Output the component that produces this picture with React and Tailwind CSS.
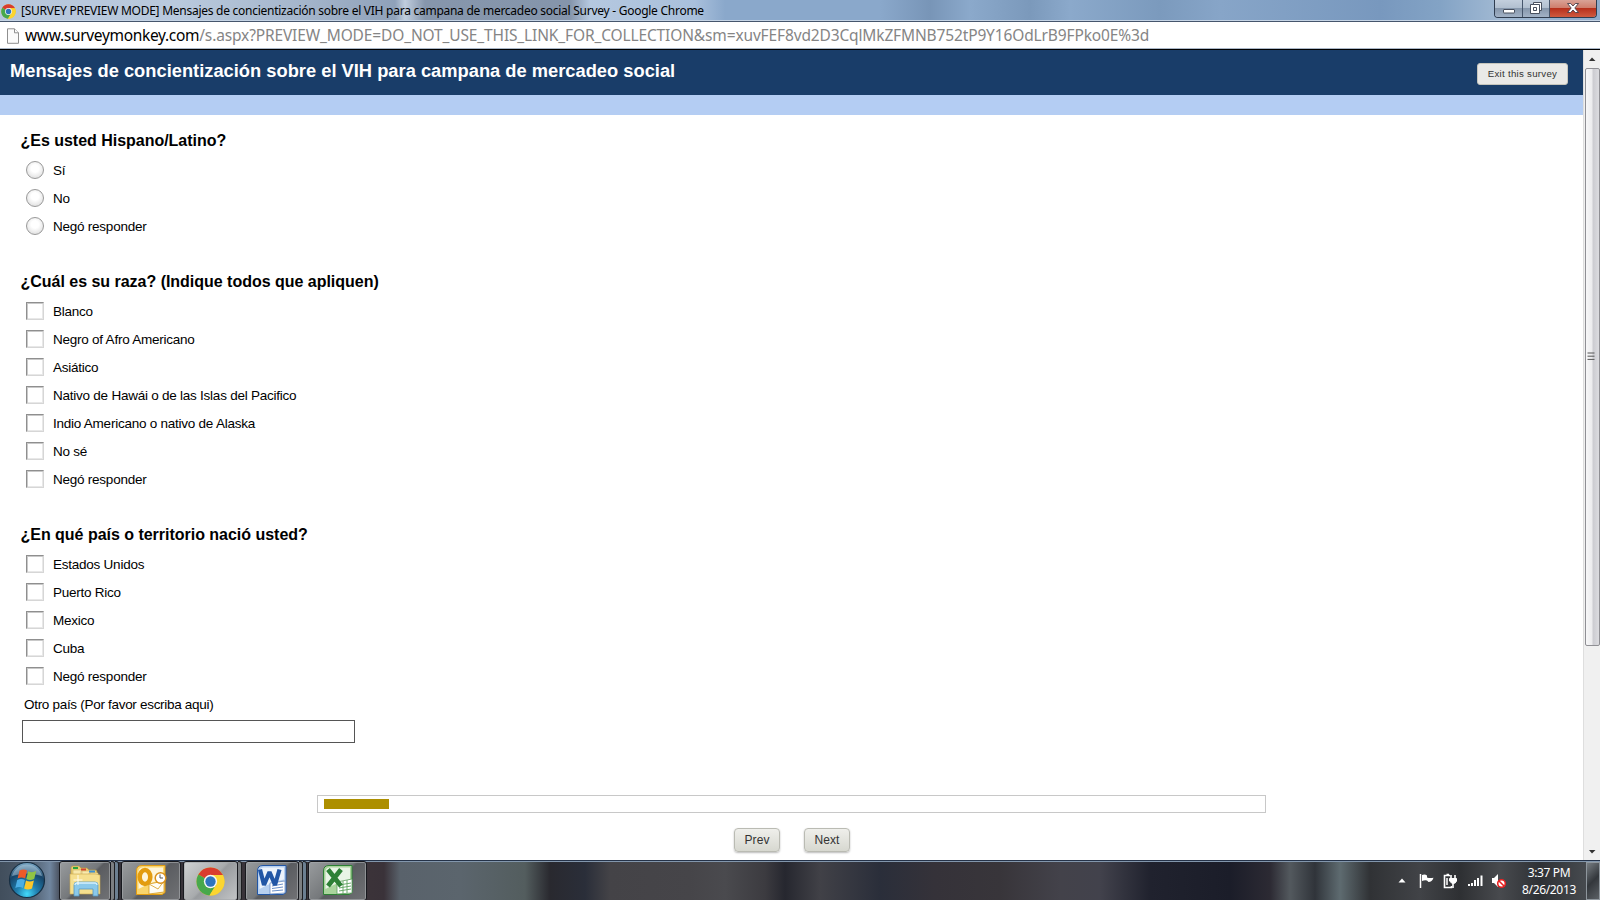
import React from "react";

const questions = [
  { title: "¿Es usted Hispano/Latino?", type: "radio", options: ["Sí", "No", "Negó responder"] },
  {
    title: "¿Cuál es su raza? (Indique todos que apliquen)",
    type: "checkbox",
    options: ["Blanco", "Negro of Afro Americano", "Asiático", "Nativo de Hawái o de las Islas del Pacifico", "Indio Americano o nativo de Alaska", "No sé", "Negó responder"],
  },
  {
    title: "¿En qué país o territorio nació usted?",
    type: "checkbox",
    options: ["Estados Unidos", "Puerto Rico", "Mexico", "Cuba", "Negó responder"],
  },
];

function ChromeLogo({ className }) {
  return (
    <svg viewBox="0 0 28 28" className={className}>
      <circle cx="14" cy="14" r="13.5" fill="#e8c62c" />
      <path d="M14 14 L2.3 7.2 A13.5 13.5 0 0 1 25.7 7.2 L25.9 7.8 H14Z" fill="#d93c2e" />
      <path d="M14 14 L2.3 7.2 A13.5 13.5 0 0 0 13 27.5 L19.6 17Z" fill="#47a84b" />
      <path d="M14 7.8 H25.9 A13.5 13.5 0 0 1 13 27.5 L19.6 17Z" fill="#fbd530" />
      <circle cx="14" cy="14" r="6.4" fill="#f6f6f6" />
      <circle cx="14" cy="14" r="5" fill="#2f74bd" />
    </svg>
  );
}

function TitleBar() {
  return (
    <header className="relative h-[20px] shrink-0 overflow-hidden bg-[linear-gradient(90deg,#b7c7dc_0,#b9c9dd_180px,#a5b6cc_300px,#8fa1b9_395px,#c0cddd_405px,#8696ac_425px,#8595ab_570px,#b5c8df_590px,#a9c0dc_695px,#8aa8cb_725px,#8aa8cb_880px,#7895b7_930px,#8ba9cb_970px,#7b99bb_1030px,#8ba9cb_1070px,#7b9abd_1160px,#87a5c8_1220px,#7898be_1380px,#83a3c5_1440px,#a1b9d3_1500px,#8faccc_1600px)]">
      <div className="flex h-full items-center pl-[1px]">
        <ChromeLogo className="mt-[2px] h-[15px] w-[15px]" />
        <span className="ml-[5px] mt-[2px] whitespace-nowrap font-['Noto_Sans',sans-serif] text-[12px] leading-[16px] tracking-[-0.263px] text-black">
          [SURVEY PREVIEW MODE] Mensajes de concientización sobre el VIH para campana de mercadeo social Survey - Google Chrome
        </span>
      </div>
      <div className="absolute right-[3px] top-0 flex h-[18px] w-[103px] overflow-hidden rounded-b-[4px] border border-t-0 border-[#2f3d50]">
        <div className="flex w-[28px] items-center justify-center border-r border-[#46566c] bg-[linear-gradient(#c3cfdd_0,#b2c0d0_45%,#8697ac_50%,#a2b2c6_100%)]">
          <svg viewBox="0 0 14 16" className="h-4 w-3.5"><rect x="1.5" y="8.5" width="11" height="3.5" rx=".5" fill="#fff" stroke="#48505f" /></svg>
        </div>
        <div className="flex w-[27px] items-center justify-center border-r border-[#46566c] bg-[linear-gradient(#c3cfdd_0,#b2c0d0_45%,#8697ac_50%,#a2b2c6_100%)]">
          <svg viewBox="0 0 14 16" className="-mt-[2px] h-4 w-3.5" fill="#fff" stroke="#48505f">
            <path d="M4.500 2.500h8v8h-8z" />
            <path d="M1.500 4.500h9v9h-9zM4.500 7.500h3v3h-3z" fillRule="evenodd" />
          </svg>
        </div>
        <div className="flex flex-1 items-center justify-center bg-[linear-gradient(#d9a296_0,#cf7e6d_45%,#b7301c_50%,#cf5a3f_100%)]">
          <svg viewBox="0 0 14 14" className="-mt-[2px] h-3.5 w-3.5"><path d="M1.500 2.500h3.200L7 5l2.300-2.500h3.200L8.800 7l3.700 4.500H9.300L7 9l-2.300 2.500H1.500L5.200 7z" fill="#fff" stroke="#48404a" strokeWidth=".9" /></svg>
        </div>
      </div>
    </header>
  );
}

function AddressBar() {
  return (
    <div className="flex h-[27px] shrink-0 items-center border-b border-[#aab7c8] bg-white pl-[7px]">
      <svg viewBox="0 0 12 16" className="mt-[1px] h-[16px] w-[12px]" fill="#fbfbfb" stroke="#8f8f8f"><path d="M.5.8h7l4 4v10.500H.5z" /><path d="M7.500.8v4h4" /></svg>
      <div className="ml-[6px] whitespace-nowrap font-['Noto_Sans',sans-serif] text-[15.5px] leading-[22px] text-[#858585]">
        <span className="tracking-[-0.32px] text-black">www.surveymonkey.com</span>
        <span className="tracking-[-0.138px]">/s.aspx?PREVIEW_MODE=DO_NOT_USE_THIS_LINK_FOR_COLLECTION&amp;sm=xuvFEF8vd2D3CqlMkZFMNB752tP9Y16OdLrB9FPko0E%3d</span>
      </div>
    </div>
  );
}

function Option({ type, label }) {
  return (
    <label className="flex h-[28px] items-center pl-[26px]">
      {type === "radio" ? (
        <span className="h-[18px] w-[18px] rounded-full border border-[#999] bg-[radial-gradient(circle_at_50%_40%,#fff_30%,#d4d4d4_100%)]" />
      ) : (
        <span className="h-[18px] w-[18px] border border-b-[#d6d6d6] border-l-[#8f8f8f] border-r-[#d6d6d6] border-t-[#8f8f8f] bg-white shadow-[inset_1px_1px_0_#c9c9c9,inset_-1px_-1px_0_#e8e8e8]" />
      )}
      <span className="ml-[9px] mt-[1px] whitespace-nowrap text-[13.5px] leading-[16px] tracking-[-0.24px]">{label}</span>
    </label>
  );
}

function Survey() {
  return (
    <div className="flex min-w-0 flex-1 flex-col bg-white">
      <div className="flex h-[45px] shrink-0 justify-between bg-[#193d69] pl-[10px] pr-[15px]">
        <h1 className="mt-[9px] whitespace-nowrap text-[18.3px] font-bold leading-[24px] tracking-[0.01px] text-white">Mensajes de concientización sobre el VIH para campana de mercadeo social</h1>
        <button className="mt-[13px] h-[22px] w-[91px] rounded-[3px] border border-[#c6c6bd] bg-[#e9e9e7] text-[9.7px] leading-[20px] tracking-[0.27px] text-[#333]">Exit this survey</button>
      </div>
      <div className="h-[20px] shrink-0 bg-[#b4cdf3]" />
      <main className="flex flex-col pt-[16px]">
        <div className="flex flex-col gap-[32px]">
          {questions.map((q) => (
            <section key={q.title}>
              <h2 className="mb-[5px] whitespace-nowrap pl-[20.5px] text-[16px] font-bold leading-[20px] tracking-[-0.02px]">{q.title}</h2>
              {q.options.map((o) => <Option key={o} type={q.type} label={o} />)}
            </section>
          ))}
        </div>
        <div className="flex h-[30px] items-center pl-[24px] text-[13.5px] tracking-[-0.3px]">Otro país (Por favor escriba aqui)</div>
        <div className="ml-[22px] h-[23px] w-[333px] border border-[#555] bg-white" />
        <div className="ml-[317px] mt-[52px] flex h-[18px] w-[949px] items-center border border-[#c8c8c8] pl-[6px]">
          <div className="h-[10px] w-[65px] bg-[#ad8f00]" />
        </div>
        <div className="mt-[15px] flex justify-center gap-[24px]">
          {["Prev", "Next"].map((t) => (
            <button key={t} className="h-[24px] w-[46px] rounded-[4px] border border-[#babbb3] bg-[linear-gradient(#efefeb,#d7d8d0)] pl-[1px] text-[12px] leading-[20px] tracking-[0.1px] text-[#333] shadow-[0_1px_2px_#bbb]">{t}</button>
          ))}
        </div>
      </main>
    </div>
  );
}

function Scrollbar() {
  return (
    <div className="flex w-[17px] shrink-0 flex-col items-center border-l border-[#dedede] bg-[#f0f0f0]">
      <svg viewBox="0 0 16 18" className="h-[18px] w-[16px]"><path d="M5 11 8 7.500 11.500 11z" fill="#333" /></svg>
      <div className="flex h-[578px] w-[15px] items-center justify-center rounded-[2px] border border-[#8f8f94] bg-[linear-gradient(90deg,#f7f7f8_0,#ececee_45%,#ccccd1_55%,#dcdce0_100%)] pb-[2px] pr-[2px]">
        <svg viewBox="0 0 8 9" className="h-[9px] w-[8px]" stroke="#555"><path d="M.5 1h7M.5 4.200h7M.5 7.400h7" /></svg>
      </div>
      <svg viewBox="0 0 16 18" className="mt-auto h-[18px] w-[16px]"><path d="M5 8 8 11.500 11.500 8z" fill="#333" /></svg>
    </div>
  );
}

function ExplorerIcon() {
  return (
    <svg viewBox="0 0 32 32" className="h-[32px] w-[32px]">
      <path d="M2 3q0-2 2-2h6l2 2h6l2 2h6q2 0 2 2v20H2z" fill="#e9ce71" stroke="#b99a42" strokeWidth=".7" />
      <path d="M4 5h9v22H4zM12 6h9v21h-9zM20 8h9v19h-9z" fill="#f8e9ac" stroke="#d2b765" strokeWidth=".6" />
      <path d="M4 2h5v2H4z" fill="#2aa33d" /><path d="M12 3.500h5v2h-5z" fill="#d24432" /><path d="M20 5.500h6v2h-6z" fill="#3e91d2" />
      <path d="M1 9h25l5 1v19H1z" fill="#f5df8e" stroke="#caa94f" strokeWidth=".6" />
      <path d="M5 31V20q0-3 3-3h18q3 0 3 3v11h-5v-7H10v7z" fill="#8bc9ea" stroke="#5798c2" strokeWidth=".8" />
      <path d="M6 20q0-2 2-2h18q2 0 2 2" stroke="#d6f0fc" strokeWidth="1.300" fill="none" />
      <path d="M9 10v10M4.500 15h9" stroke="#fffdf0" strokeWidth="1" />
    </svg>
  );
}

function OfficeIcon({ kind }) {
  const colors = { O: ["#e39c10", "#f9d56d"], W: ["#2256a5", "#b7d0f0"], X: ["#2d8035", "#a9d49c"] }[kind];
  return (
    <svg viewBox="0 0 32 32" className="-mt-[3px] h-[32px] w-[32px]">
      <path d="M7 1.500h23v27l-3 2H1.500V7q0-5.500 5.500-5.500z" fill={colors[1]} stroke={colors[0]} strokeWidth="1" />
      <path d="M3.500 8q0-4.500 4.500-4.500h20v12Q18 17 3.500 25z" fill="#fff" opacity=".75" />
      {kind === "O" && (
        <>
          <ellipse cx="10" cy="13" rx="5.300" ry="7" fill="none" stroke={colors[0]} strokeWidth="4.500" />
          <path d="M14 20 29 17v11l-15 2z" fill="#fffdf4" stroke="#d49a22" strokeWidth=".8" /><path d="m14 20 9 5 6-8" fill="none" stroke="#d49a22" strokeWidth=".8" />
          <circle cx="25.500" cy="14" r="5.300" fill="#fff" stroke="#d99018" strokeWidth="1.500" /><path d="M25 10.500V14h3" stroke="#555" fill="none" />
        </>
      )}
      {kind === "W" && (
        <>
          <path d="M14 19l15-2v12l-15 1z" fill="#fff" stroke="#6f91c4" strokeWidth=".8" /><path d="m16 22 11-2M16 24.500l11-1.500M16 27l11-1" stroke="#6b8fc9" />
          <path d="M4 5.500 8 21 13.500 8 19 21 23.500 5.500" fill="none" stroke={colors[0]} strokeWidth="4.200" strokeLinejoin="bevel" />
        </>
      )}
      {kind === "X" && (
        <>
          <path d="M15 18 30 15v14l-15 1z" fill="#fff" stroke="#5e9e60" strokeWidth=".8" /><path d="m17 21 12-2M17 24l12-2M17 27l12-2M21 17v13M25 16v13" stroke="#6aab6b" />
          <path d="M6 5.500 19 22M19 5.500 6 22" fill="none" stroke={colors[0]} strokeWidth="4.700" />
        </>
      )}
    </svg>
  );
}

function TaskButton({ children, active, stack = 0, className }) {
  return (
    <div className={"flex h-[40px] shrink-0 " + className}>
      <div className={"flex min-w-0 flex-1 items-center justify-center rounded-[3px] border border-[#17191e] shadow-[inset_0_0_0_1px_#a5a8abaa] " + (active ? "bg-[linear-gradient(135deg,#d0d2d3_0,#a8abad_48%,#989b9e_52%,#c3c5c7_100%)]" : "bg-[linear-gradient(135deg,#999c9e_0,#75787b_48%,#5a5c60_52%,#717275_100%)]")}>
        {children}
      </div>
      {stack > 0 && <div className="w-[4px] rounded-r-[3px] border border-l-0 border-[#1c1d20] bg-[#7c7f82]" />}
      {stack > 1 && <div className="w-[4px] rounded-r-[3px] border border-l-0 border-[#1c1d20] bg-[#6c7f91]" />}
    </div>
  );
}

function Taskbar() {
  return (
    <footer className="relative flex h-[40px] shrink-0 overflow-hidden border-t border-[#253349] bg-[linear-gradient(90deg,#414e5c_0,#4d5b6b_30px,#70869f_50px,#35333a_65px,#3b3339_370px,#3a3239_384px,#59626b_400px,#5b656d_460px,#535d5e_525px,#29292f_550px,#2a2e39_585px,#444347_610px,#464549_690px,#4a4a4e_725px,#3c3b40_765px,#26272f_785px,#414147_820px,#2a2e3a_880px,#353239_935px,#38353a_1000px,#43424a_1060px,#42424c_1100px,#20222e_1150px,#1b1d29_1230px,#2c2a33_1270px,#53595e_1290px,#30343a_1315px,#5e6b70_1340px,#303235_1370px,#414347_1420px,#2e3033_1460px,#484a4e_1500px,#2e3135_1540px,#4e5257_1600px)] shadow-[inset_0_1px_0_#8296ac]">
      <svg viewBox="0 0 38 38" className="ml-[8px] h-[38px] w-[38px] shrink-0">
        <defs>
          <radialGradient id="orb" cx=".5" cy=".9" r=".85"><stop offset="0" stopColor="#43dafa" /><stop offset=".35" stopColor="#207faf" /><stop offset=".75" stopColor="#174468" /><stop offset="1" stopColor="#709dbc" /></radialGradient>
        </defs>
        <circle cx="19" cy="19" r="17.500" fill="url(#orb)" stroke="#172f43" strokeWidth="1.200" />
        <path d="M4 15a15.500 15.500 0 0 1 30 0q-15-5-30 0z" fill="#c2dae8" opacity=".45" />
        <path d="M11.500 9.500q4.500-2 7.500 0l-1.900 8q-3.800-2-7.500 0z" fill="#ed5a28" />
        <path d="M20.200 10.200q3.800 2 8-.2L26.200 18q-4.300 2-7.900 0z" fill="#91c444" />
        <path d="M9.200 19q4-1.800 7.700 0L15 27q-3.700-2-7.700 0z" fill="#4baee5" />
        <path d="M18 19.500q3.700 2 7.900 0L24 27.500q-4.300 2-7.900 0z" fill="#fcc72a" />
      </svg>
      <TaskButton className="ml-[13px] w-[60px]" stack={2}><ExplorerIcon /></TaskButton>
      <TaskButton className="ml-[2px] w-[60px]"><OfficeIcon kind="O" /></TaskButton>
      <TaskButton className="ml-[2px] w-[59px]" active stack={1}><ChromeLogo className="h-[29px] w-[29px]" /></TaskButton>
      <TaskButton className="ml-[3px] w-[62px]" stack={2}><OfficeIcon kind="W" /></TaskButton>
      <TaskButton className="ml-[1px] w-[59px]"><OfficeIcon kind="X" /></TaskButton>

      <div className="ml-auto flex h-full items-center">
        <svg viewBox="0 0 8 5" className="h-[5px] w-[8px]"><path d="m.5 4.500 3.500-4 3.500 4z" fill="#fff" /></svg>
        <svg viewBox="0 0 16 16" className="ml-[13px] h-[16px] w-[16px]"><path d="M1.500 1v14" stroke="#fff" strokeWidth="1.500" /><path d="M3 2q3-1 5 .5v2q3 1 6.500.2Q13 9 9.500 9L8 7.500Q5.500 7 3 8z" fill="#fff" /></svg>
        <svg viewBox="0 0 16 16" className="ml-[8px] h-[16px] w-[16px]" fill="none" stroke="#fff"><path d="M7 2.500H1.500v12h7V13M3.500 1.500H6" strokeWidth="1.600" /><path d="M4 5v7" strokeWidth="1.500" /><path d="M6.500 5.500h7V8q-1 2.500-3 2.500T6.500 8z" fill="#fff" /><path d="M8 2v4M12 2v4M10 10v5" strokeWidth="1.600" /></svg>
        <svg viewBox="0 0 16 14" className="ml-[9px] h-[14px] w-[16px]" fill="#fff"><path d="M0 10h2v2H0zM3 9h2v3H3zM6 6h2v6H6zM9 4h2v8H9zM12.500 1.500h2V12h-2z" /></svg>
        <svg viewBox="0 0 16 16" className="ml-[7px] h-[16px] w-[16px]"><path d="M1 5h2l4-4v13l-4-4H1z" fill="#fff" /><circle cx="10.500" cy="10.500" r="3.800" fill="#fff" stroke="#e92020" strokeWidth="1.600" /><path d="m8 8 5 5" stroke="#e92020" strokeWidth="1.600" /></svg>
        <div className="ml-[7px] w-[70px] text-center font-['Noto_Sans',sans-serif] text-[12px] leading-[17px] tracking-[-0.35px] text-white"><div>3:37 PM</div><div>8/26/2013</div></div>
        <div className="ml-[2px] h-[38px] w-[14px] border border-[#8e969d] bg-[linear-gradient(135deg,#777d82,#33373c_50%,#5b6065)]" />
      </div>
    </footer>
  );
}

export default function App() {
  return (
    <div className="flex h-[900px] w-[1600px] flex-col overflow-hidden bg-white font-['Liberation_Sans',Arial,sans-serif] text-black">
      <TitleBar />
      <div className="h-[2px] shrink-0 border-b border-[#46566d] bg-[#c5d4e5]" />
      <AddressBar />
      <div className="h-px shrink-0 bg-black" />
      <div className="flex min-h-0 flex-1"><Survey /><Scrollbar /></div>
      <Taskbar />
    </div>
  );
}
